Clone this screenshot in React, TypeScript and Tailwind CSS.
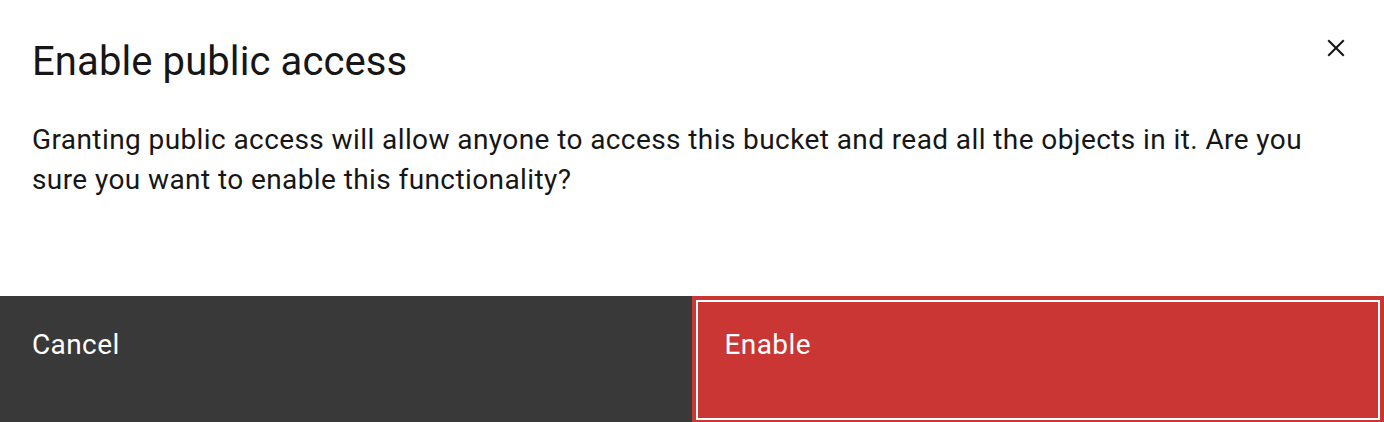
import React from "react";

export default function App() {
  return (
    <div className="w-[1384px] h-[422px] overflow-hidden bg-white flex flex-col font-['Roboto',sans-serif] text-[#161616]">
      <div className="relative pt-[34px] pl-8 pr-24">
        <h2 className="text-[40px] leading-[56px] font-normal tracking-[0.1px]">Enable public access</h2>
        <button className="absolute top-0 right-0 w-24 h-24 flex items-center justify-center text-[#161616]" aria-label="Close">
          <svg width="34" height="34" viewBox="0 0 32 32" fill="currentColor">
            <path d="M24 9.4L22.6 8 16 14.6 9.4 8 8 9.4 14.6 16 8 22.6 9.4 24 16 17.4 22.6 24 24 22.6 17.4 16 24 9.4z" />
          </svg>
        </button>
      </div>
      <div className="mt-[14px] pt-4 pl-8 pr-[52px] pb-24 text-[28px] leading-[40px] tracking-[0.41px]">
        Granting public access will allow anyone to access this bucket and read all the objects in it. Are you sure you want to enable this functionality?
      </div>
      <div className="flex h-[128px] shrink-0">
        <button className="flex-1 bg-[#393939] text-white text-left pl-8 pt-[31px] text-[28px] leading-[36px] tracking-[0.4px] flex items-start">
          Cancel
        </button>
        <button className="flex-1 bg-[#c93634] text-white text-left pl-[33px] pt-[31px] text-[28px] leading-[36px] tracking-[0.4px] flex items-start shadow-[inset_0_0_0_4px_#c93634,inset_0_0_0_6px_#ffffff]">
          Enable
        </button>
      </div>
    </div>
  );
}
